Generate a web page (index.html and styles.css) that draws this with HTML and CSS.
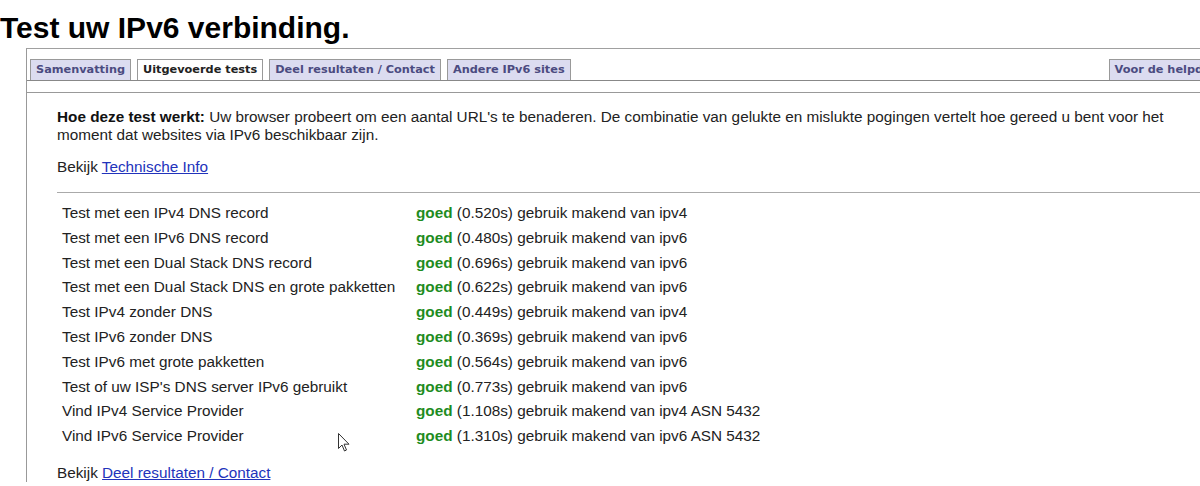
FILE: index.html
```html
<!DOCTYPE html>
<html lang="nl">
<head>
    <meta charset="UTF-8">
    <meta name="viewport" content="width=device-width, initial-scale=1.0">
    <title>Test uw IPv6 verbinding</title>
    <link rel="stylesheet" href="styles.css">
</head>
<body>
    <h1>Test uw IPv6 verbinding.</h1>

    <div class="container">
        <div class="tabs">
            <a class="tab" href="#">Samenvatting</a>
            <a class="tab active" href="#">Uitgevoerde tests</a>
            <a class="tab" href="#">Deel resultaten / Contact</a>
            <a class="tab" href="#">Andere IPv6 sites</a>
            <a class="tab tab-right" href="#">Voor de helpdesk</a>
        </div>

        <div class="content">
            <p class="intro"><b>Hoe deze test werkt:</b> Uw browser probeert om een aantal URL's te benaderen. De combinatie van gelukte en mislukte pogingen vertelt hoe gereed u bent voor het moment dat websites via IPv6 beschikbaar zijn.</p>
            <p>Bekijk <a href="#">Technische Info</a></p>
            <hr>

            <table class="results">
                <tr><td class="name">Test met een IPv4 DNS record</td><td><span class="ok">goed</span> (0.520s) gebruik makend van ipv4</td></tr>
                <tr><td class="name">Test met een IPv6 DNS record</td><td><span class="ok">goed</span> (0.480s) gebruik makend van ipv6</td></tr>
                <tr><td class="name">Test met een Dual Stack DNS record</td><td><span class="ok">goed</span> (0.696s) gebruik makend van ipv6</td></tr>
                <tr><td class="name">Test met een Dual Stack DNS en grote pakketten</td><td><span class="ok">goed</span> (0.622s) gebruik makend van ipv6</td></tr>
                <tr><td class="name">Test IPv4 zonder DNS</td><td><span class="ok">goed</span> (0.449s) gebruik makend van ipv4</td></tr>
                <tr><td class="name">Test IPv6 zonder DNS</td><td><span class="ok">goed</span> (0.369s) gebruik makend van ipv6</td></tr>
                <tr><td class="name">Test IPv6 met grote pakketten</td><td><span class="ok">goed</span> (0.564s) gebruik makend van ipv6</td></tr>
                <tr><td class="name">Test of uw ISP's DNS server IPv6 gebruikt</td><td><span class="ok">goed</span> (0.773s) gebruik makend van ipv6</td></tr>
                <tr><td class="name">Vind IPv4 Service Provider</td><td><span class="ok">goed</span> (1.108s) gebruik makend van ipv4 ASN 5432</td></tr>
                <tr><td class="name">Vind IPv6 Service Provider</td><td><span class="ok">goed</span> (1.310s) gebruik makend van ipv6 ASN 5432</td></tr>
            </table>

            <p class="share">Bekijk <a href="#">Deel resultaten / Contact</a></p>
        </div>
    </div>

    <!-- muisaanwijzer uit de schermafbeelding -->
    <svg class="cursor" width="12" height="19" viewBox="0 0 12 19">
        <path d="M0.5 0.5 L0.5 15.5 L4 12 L6.5 18 L8.5 17 L6 11.2 L11 11.2 Z" fill="#fff" stroke="#333" stroke-width="1"/>
    </svg>
</body>
</html>
```

FILE: styles.css
```css
body {
    margin: 0;
    background: #fff;
    font-family: "Liberation Sans", Arial, sans-serif;
    font-size: 15.3px;
    color: #222;
    overflow: hidden;
    position: relative;
}
h1 {
    margin: 0;
    padding-top: 12px;
    font-size: 30px;
    line-height: 32px;
    color: #000;
    white-space: nowrap;
}
.container {
    margin: 4px 0 0 26px;
    width: 1250px;
    border-top: 1px solid #a0a0a0;
    border-left: 1px solid #999;
}
.tabs {
    display: flex;
    align-items: flex-end;
    gap: 6px;
    padding: 10px 0 0 3px;
    border-bottom: 1px solid #888;
}
.tab {
    display: block;
    height: 20px;
    line-height: 20px;
    padding: 0 5px;
    border: 1px solid #999;
    border-bottom: 0;
    background: #dcdcf0;
    color: #4b4b80;
    font-family: "DejaVu Sans", Verdana, sans-serif;
    font-size: 11.3px;
    font-weight: bold;
    text-decoration: none;
    white-space: nowrap;
}
.tab.active {
    background: #fff;
    color: #222;
}
.tab-right {
    margin-left: auto;
    margin-right: 46px;
}
.content {
    margin-top: 11px;
    border-top: 1px solid #999;
    padding: 15px 0 0 30px;
    line-height: 18px;
}
.content p {
    margin: 14px 0 0;
}
.content p.intro {
    margin: 0;
    max-width: 1120px;
}
.content p.share {
    margin-top: 15px;
}
.content b {
    color: #111;
}
a {
    color: #2233bb;
}
hr {
    border: 0;
    border-top: 1px solid #aaa;
    margin: 16px 0 8px;
    height: 0;
}
.results {
    border-collapse: collapse;
}
.results td {
    padding: 0 5px;
    line-height: 24.8px;
    white-space: nowrap;
}
.results td.name {
    width: 344px;
}
.ok {
    color: #1e8c1e;
    font-weight: bold;
}
.cursor {
    position: absolute;
    left: 338px;
    top: 433px;
}
```
